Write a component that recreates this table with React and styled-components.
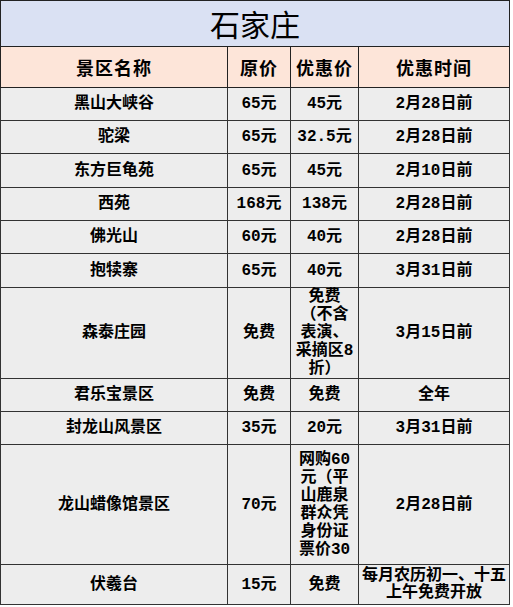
import React from "react";
import styled, { createGlobalStyle } from "styled-components";

const GlobalStyle = createGlobalStyle`
  body {
    margin: 0;
    background: #ffffff;
  }
`;

const Table = styled.table`
  width: 509px;
  border-collapse: collapse;
  table-layout: fixed;
  font-family: "Liberation Mono", "Noto Sans CJK SC", monospace;
  font-weight: bold;
  color: #000;
`;

const TitleCell = styled.th`
  height: 45px;
  padding: 0;
  background: #dae1f3;
  border: 1px solid #222;
  font-family: "Noto Sans CJK SC", sans-serif;
  font-weight: 400;
  font-size: 30px;
  line-height: 45px;
`;

const HeadCell = styled.th`
  height: 40px;
  padding: 0;
  background: #fde5d9;
  border: 1px solid #222;
  font-family: "Noto Sans CJK SC", sans-serif;
  font-weight: bold;
  font-size: 18px;
  letter-spacing: 1px;
`;

const Cell = styled.td`
  padding: 0;
  background: #ededed;
  border: 1px solid #333;
  text-align: center;
  vertical-align: middle;
  font-size: 16px;
  line-height: ${(p) => p.$lh || 18}px;
`;

const Line = styled.span`
  display: block;
  white-space: nowrap;
`;

const rows = [
  ["黑山大峡谷", "65元", "45元", "2月28日前", 33],
  ["驼梁", "65元", "32.5元", "2月28日前", 33],
  ["东方巨龟苑", "65元", "45元", "2月10日前", 34],
  ["西苑", "168元", "138元", "2月28日前", 33],
  ["佛光山", "60元", "40元", "2月28日前", 33],
  ["抱犊寨", "65元", "40元", "3月31日前", 34],
  ["森泰庄园", "免费", ["免费", "（不含", "表演、", "采摘区8", "折）"], "3月15日前", 90],
  ["君乐宝景区", "免费", "免费", "全年", 33],
  ["封龙山风景区", "35元", "20元", "3月31日前", 33],
  ["龙山蜡像馆景区", "70元", ["网购60", "元（平", "山鹿泉", "群众凭", "身份证", "票价30"], "2月28日前", 120],
  ["伏羲台", "15元", "免费", ["每月农历初一、十五", "上午免费开放"], 40],
];

const Text = ({ value }) =>
  Array.isArray(value) ? value.map((l, i) => <Line key={i}>{l}</Line>) : value;

export default function App() {
  return (
    <>
      <GlobalStyle />
      <Table>
        <colgroup>
          <col style={{ width: 227 }} />
          <col style={{ width: 63 }} />
          <col style={{ width: 68 }} />
          <col style={{ width: 151 }} />
        </colgroup>
        <thead>
          <tr>
            <TitleCell colSpan={4}>石家庄</TitleCell>
          </tr>
          <tr>
            <HeadCell>景区名称</HeadCell>
            <HeadCell>原价</HeadCell>
            <HeadCell>优惠价</HeadCell>
            <HeadCell>优惠时间</HeadCell>
          </tr>
        </thead>
        <tbody>
          {rows.map(([name, price, deal, time, h]) => (
            <tr key={name} style={{ height: h }}>
              <Cell>{name}</Cell>
              <Cell>{price}</Cell>
              <Cell>
                <Text value={deal} />
              </Cell>
              <Cell $lh={Array.isArray(time) ? 17 : 18}>
                <Text value={time} />
              </Cell>
            </tr>
          ))}
        </tbody>
      </Table>
    </>
  );
}
